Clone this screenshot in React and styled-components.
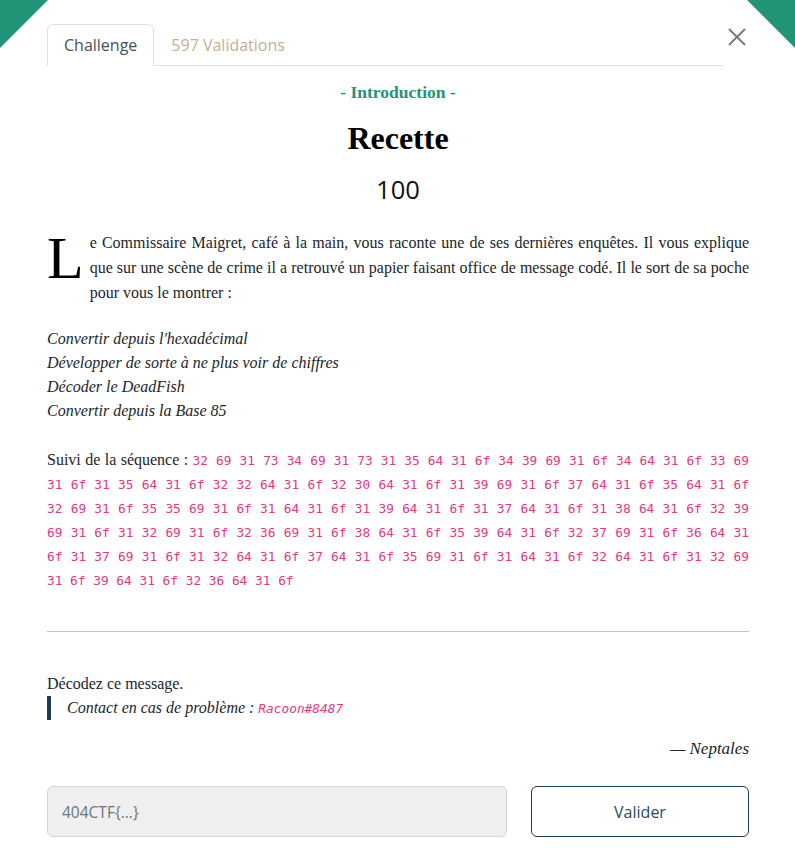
import styled, { createGlobalStyle } from "styled-components";

const GlobalStyle = createGlobalStyle`
  body {
    margin: 0;
    background: #fff;
    color: #212529;
    font-family: "Liberation Serif", "Times New Roman", serif;
  }
`;

const Page = styled.div`
  position: relative;
  width: 795px;
  height: 861px;
  box-sizing: border-box;
  padding: 24px 46px 0 47px;
  overflow: hidden;
`;

const Corner = styled.div`
  position: absolute;
  top: 0;
  ${(p) => (p.$right ? "right: 0;" : "left: 0;")}
  width: 48px;
  height: 48px;
  background: #229478;
  clip-path: ${(p) =>
    p.$right ? "polygon(0 0, 100% 0, 100% 100%)" : "polygon(0 0, 100% 0, 0 100%)"};
`;

const Header = styled.div`
  display: flex;
  align-items: flex-start;
`;

const Tabs = styled.div`
  flex: 1;
  display: flex;
  border-bottom: 1px solid #dee2e6;
`;

const Tab = styled.div`
  font-family: "Open Sans", sans-serif;
  font-size: 16px;
  line-height: 24px;
  padding: 8px 16px;
  margin-bottom: -1px;
  border: 1px solid ${(p) => (p.$active ? "#dee2e6" : "transparent")};
  border-bottom-color: ${(p) => (p.$active ? "#fff" : "transparent")};
  border-radius: 6px 6px 0 0;
  background: ${(p) => (p.$active ? "#fff" : "transparent")};
  color: ${(p) => (p.$active ? "#495057" : "#c4ae93")};
`;

const Close = styled.button`
  width: 24px;
  height: 24px;
  margin: 1px 0 0 1px;
  padding: 0;
  border: 0;
  background: none;
  display: flex;
  align-items: center;
  justify-content: center;
`;

const Intro = styled.div`
  text-align: center;
  color: #229478;
  font-weight: bold;
  font-size: 17.5px;
  line-height: 20px;
  margin-top: 16px;
`;

const Title = styled.h2`
  text-align: center;
  font-size: 32px;
  line-height: 38px;
  margin: 17px 0 0;
  color: #000;
`;

const Points = styled.div`
  text-align: center;
  font-family: "Open Sans", sans-serif;
  font-size: 25.6px;
  line-height: 34px;
  margin-top: 16px;
  color: #111;
`;

const Lead = styled.p`
  font-size: 16px;
  line-height: 25px;
  text-align: justify;
  margin: 23px 0 0;
`;

const DropCap = styled.span`
  float: left;
  font-size: 60px;
  line-height: 56px;
  margin-right: 6px;
  color: #000;
`;

const Steps = styled.div`
  margin-top: 22px;
  font-style: italic;
  font-size: 16px;
  line-height: 24px;
`;

const Sequence = styled.p`
  font-size: 16px;
  line-height: 24px;
  text-align: justify;
  margin: 25px 0 0;
`;

const Code = styled.code`
  font-family: "DejaVu Sans Mono", "Liberation Mono", monospace;
  font-size: 12.8px;
  line-height: 1;
  color: #e0397f;
  font-style: ${(p) => (p.$italic ? "italic" : "normal")};
`;

const Rule = styled.hr`
  border: 0;
  border-top: 1px solid #c2c2c2;
  margin: 39px 0 0;
`;

const Prompt = styled.p`
  font-size: 16px;
  line-height: 24px;
  margin: 40px 0 0;
`;

const Quote = styled.blockquote`
  margin: 0;
  border-left: 4px solid #1b3d57;
  padding-left: 16px;
  font-style: italic;
  font-size: 16px;
  line-height: 24px;
`;

const Signature = styled.div`
  text-align: right;
  font-style: italic;
  font-size: 17px;
  line-height: 24px;
  margin-top: 17px;
`;

const Form = styled.div`
  display: grid;
  grid-template-columns: 460px 1fr;
  gap: 24px;
  margin-top: 25px;
`;

const FlagInput = styled.input`
  height: 51px;
  box-sizing: border-box;
  border: 1px solid #d3d6d9;
  border-radius: 6px;
  background: #efefef;
  padding: 0 14px;
  font-family: "Open Sans", sans-serif;
  font-size: 15.5px;
  color: #495057;
  outline: none;

  &::placeholder {
    color: #6c757d;
  }
`;

const Submit = styled.button`
  height: 51px;
  border: 1px solid #1b3d57;
  border-radius: 6px;
  background: #fff;
  font-family: "Open Sans", sans-serif;
  font-size: 16px;
  color: #2c4a5f;
`;

const sequence =
  "32 69 31 73 34 69 31 73 31 35 64 31 6f 34 39 69 31 6f 34 64 31 6f 33 69 31 6f 31 35 64 31 6f 32 32 64 31 6f 32 30 64 31 6f 31 39 69 31 6f 37 64 31 6f 35 64 31 6f 32 69 31 6f 35 35 69 31 6f 31 64 31 6f 31 39 64 31 6f 31 37 64 31 6f 31 38 64 31 6f 32 39 69 31 6f 31 32 69 31 6f 32 36 69 31 6f 38 64 31 6f 35 39 64 31 6f 32 37 69 31 6f 36 64 31 6f 31 37 69 31 6f 31 32 64 31 6f 37 64 31 6f 35 69 31 6f 31 64 31 6f 32 64 31 6f 31 32 69 31 6f 39 64 31 6f 32 36 64 31 6f";

const steps = [
  "Convertir depuis l'hexadécimal",
  "Développer de sorte à ne plus voir de chiffres",
  "Décoder le DeadFish",
  "Convertir depuis la Base 85",
];

export default function App() {
  return (
    <>
      <GlobalStyle />
      <Page>
        <Corner />
        <Corner $right />
        <Header>
          <Tabs>
            <Tab $active>Challenge</Tab>
            <Tab>597 Validations</Tab>
          </Tabs>
          <Close aria-label="Fermer">
            <svg width="18" height="18" viewBox="0 0 18 18">
              <path d="M1 1L17 17M17 1L1 17" stroke="#777" strokeWidth="1.8" />
            </svg>
          </Close>
        </Header>

        <Intro>- Introduction -</Intro>
        <Title>Recette</Title>
        <Points>100</Points>

        <Lead>
          <DropCap>L</DropCap>e Commissaire Maigret, café à la main, vous raconte une de ses
          dernières enquêtes. Il vous explique que sur une scène de crime il a retrouvé un
          papier faisant office de message codé. Il le sort de sa poche pour vous le montrer :
        </Lead>

        <Steps>
          {steps.map((s) => (
            <div key={s}>{s}</div>
          ))}
        </Steps>

        <Sequence>
          Suivi de la séquence : <Code>{sequence}</Code>
        </Sequence>

        <Rule />

        <Prompt>Décodez ce message.</Prompt>
        <Quote>
          Contact en cas de problème : <Code $italic>Racoon#8487</Code>
        </Quote>
        <Signature>— Neptales</Signature>

        <Form>
          <FlagInput placeholder="404CTF{...}" />
          <Submit>Valider</Submit>
        </Form>
      </Page>
    </>
  );
}
